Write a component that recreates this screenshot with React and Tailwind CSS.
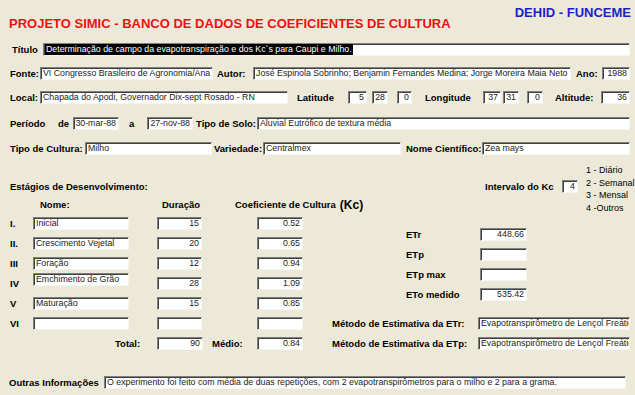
import React from "react";

/* campo de texto estilo Windows (borda afundada) */
function Field({ w, right, className = "", children }) {
  return (
    <div
      className={`${w} h-[13px] shrink-0 flex items-center overflow-hidden whitespace-nowrap bg-white border border-t-[#808080] border-l-[#808080] border-r-[#f6f5f0] border-b-[#f6f5f0] shadow-[inset_1px_1px_0_#404040] text-[8.8px] leading-none text-[#222] ${
        right ? "justify-end pr-[2px]" : "pl-[2px]"
      } ${className}`}
    >
      {children}
    </div>
  );
}

function Label({ w, className = "", children }) {
  return (
    <span className={`${w} shrink-0 font-bold whitespace-nowrap ${className}`}>
      {children}
    </span>
  );
}

const stages = [
  ["I.", "Inicial", "15", "0.52"],
  ["II.", "Crescimento Vejetal", "20", "0.65"],
  ["III", "Foração", "12", "0.94"],
  ["IV", "Emchimento de Grão", "28", "1.09"],
  ["V", "Maturação", "15", "0.85"],
  ["VI", "", "", ""],
];

const etRows = [
  ["ETr", "448.66"],
  ["ETp", ""],
  ["ETp max", ""],
  ["ETo medido", "535.42"],
];

export default function App() {
  return (
    <div className="w-[635px] h-[395px] overflow-hidden bg-[#ece9d8] font-['Liberation_Sans',Arial,sans-serif] text-[9.5px] leading-none text-black">
      {/* CABEÇALHO */}
      <div className="h-[43px] flex items-start">
        <h1 className="ml-[9px] mt-[16px] text-[13px] leading-[15px] font-bold text-[#ee1111] whitespace-nowrap">
          PROJETO SIMIC - BANCO DE DADOS DE COEFICIENTES DE CULTURA
        </h1>
        <div className="ml-auto mr-[4px] mt-[5px] text-[13px] leading-[15px] font-bold text-[#1e1ec8] whitespace-nowrap">
          DEHID - FUNCEME
        </div>
      </div>

      {/* TÍTULO */}
      <div className="h-[13px] flex items-center pl-[12px]">
        <Label w="w-[31px]">Título</Label>
        <Field w="w-[587px]" className="!pl-[1px]">
          <span className="h-full flex items-center bg-black text-white px-[1px]">
            Determinação de campo da evapotranspiração e dos Kc`s para Caupi e Milho.
          </span>
        </Field>
      </div>

      {/* FONTE / AUTOR / ANO */}
      <div className="mt-[11px] h-[13px] flex items-center pl-[10px]">
        <Label w="w-[30px]">Fonte:</Label>
        <Field w="w-[173px]">VI Congresso Brasileiro de Agronomia/Ana</Field>
        <Label w="w-[40px]" className="pl-[4px]">Autor:</Label>
        <Field w="w-[318px]">
          José Espinola Sobrinho; Benjamin Fernandes Medina; Jorge Moreira Maia Neto
        </Field>
        <Label w="w-[31px]" className="pl-[5px]">Ano:</Label>
        <Field w="w-[28px]" right>1988</Field>
      </div>

      {/* LOCAL / COORDENADAS */}
      <div className="mt-[11px] h-[13px] flex items-center pl-[10px]">
        <Label w="w-[30px]">Local:</Label>
        <Field w="w-[248px]">Chapada do Apodi, Governador Dix-sept Rosado - RN</Field>
        <Label w="w-[60px]" className="pl-[9px]">Latitude</Label>
        <Field w="w-[19px]" right>5</Field>
        <Field w="w-[16px]" right className="ml-[5px]">28</Field>
        <Field w="w-[15px]" right className="ml-[9px]">0</Field>
        <Label w="w-[71px]" className="pl-[13px]">Longitude</Label>
        <Field w="w-[18px]" right>37</Field>
        <Field w="w-[16px]" right className="ml-[2px]">31</Field>
        <Field w="w-[16px]" right className="ml-[8px]">0</Field>
        <Label w="w-[58px]" className="pl-[12px]">Altitude:</Label>
        <Field w="w-[29px]" right>36</Field>
      </div>

      {/* PERÍODO / SOLO */}
      <div className="mt-[13px] h-[13px] flex items-center pl-[10px]">
        <Label w="w-[48px]">Período</Label>
        <Label w="w-[15px]">de</Label>
        <Field w="w-[46px]" right>30-mar-88</Field>
        <Label w="w-[28px]" className="pl-[10px]">a</Label>
        <Field w="w-[46px]" right>27-nov-88</Field>
        <Label w="w-[64px]" className="pl-[3px]">Tipo de Solo:</Label>
        <Field w="w-[373px]">Aluvial Eutrófico de textura média</Field>
      </div>

      {/* CULTURA */}
      <div className="mt-[12px] h-[13px] flex items-center pl-[10px]">
        <Label w="w-[75px]">Tipo de Cultura:</Label>
        <Field w="w-[127px]">Milho</Field>
        <Label w="w-[51px]" className="pl-[2px]">Variedade:</Label>
        <Field w="w-[138px]">Centralmex</Field>
        <Label w="w-[81px]" className="pl-[5px]">Nome Científico:</Label>
        <Field w="w-[148px]">Zea mays</Field>
      </div>

      <div className="h-[195px] flex">
        {/* ESTÁGIOS */}
        <div className="w-[330px] shrink-0 flex flex-col">
          <p className="mt-[25px] h-[13px] flex items-center pl-[10px] font-bold">
            Estágios de Desenvolvimento:
          </p>
          <div className="mt-[5px] h-[13px] flex items-center pl-[40px] font-bold whitespace-nowrap">
            <span className="w-[122px] shrink-0">Nome:</span>
            <span className="w-[73px] shrink-0">Duração</span>
            <span className="flex items-center">
              Coeficiente de Cultura
              <span className="ml-[4px] text-[12px] font-bold">(Kc)</span>
            </span>
          </div>
          <div className="mt-[6px] flex flex-col gap-[7px]">
            {stages.map(([num, nome, dur, kc]) => (
              <div key={num} className="h-[13px] flex items-center">
                <Label w="w-[33px]" className="pl-[10px]">{num}</Label>
                <Field w="w-[96px]" className={num === "IV" ? "mb-[8px]" : ""}>
                  {nome}
                </Field>
                <Field w="w-[45px]" right className="ml-[28px]">{dur}</Field>
                <Field w="w-[46px]" right className="ml-[55px]">{kc}</Field>
              </div>
            ))}
            <div className="h-[13px] flex items-center pl-[115px]">
              <Label w="w-[42px]">Total:</Label>
              <Field w="w-[46px]" right>90</Field>
              <Label w="w-[54px]" className="pl-[9px]">Médio:</Label>
              <Field w="w-[46px]" right>0.84</Field>
            </div>
          </div>
        </div>

        {/* KC / EVAPOTRANSPIRAÇÃO */}
        <div className="flex-1 flex flex-col">
          <div className="mt-[9px] flex pl-[155px]">
            <div className="mt-[16px] h-[13px] flex items-center self-start">
              <Label w="w-[77px]">Intervalo do Kc</Label>
              <Field w="w-[16px]" right>4</Field>
            </div>
            <div className="ml-[8px] text-[9px] leading-[12.5px] whitespace-nowrap">
              <p>1 - Diário</p>
              <p>2 - Semanal</p>
              <p>3 - Mensal</p>
              <p>4 -Outros</p>
            </div>
          </div>

          <div className="mt-[14px] flex flex-col gap-[7px] pl-[76px]">
            {etRows.map(([label, value]) => (
              <div key={label} className="h-[13px] flex items-center">
                <Label w="w-[74px]">{label}</Label>
                <Field w="w-[47px]" right>{value}</Field>
              </div>
            ))}
          </div>

          <div className="mt-[16px] flex flex-col gap-[7px] pl-[2px]">
            <div className="h-[13px] flex items-center">
              <Label w="w-[146px]">Método de Estimativa da ETr:</Label>
              <Field w="w-[152px]">Evapotranspirômetro de Lençol Freático</Field>
            </div>
            <div className="h-[13px] flex items-center">
              <Label w="w-[146px]">Método de Estimativa da ETp:</Label>
              <Field w="w-[152px]">Evapotranspirômetro de Lençol Freático</Field>
            </div>
          </div>
        </div>
      </div>

      {/* OUTRAS INFORMAÇÕES */}
      <div className="mt-[26px] h-[13px] flex items-center pl-[9px]">
        <Label w="w-[95px]">Outras Informações</Label>
        <Field w="w-[522px]">
          O experimento foi feito com média de duas repetições, com 2 evapotranspirômetros para o milho e 2 para a grama.
        </Field>
      </div>
    </div>
  );
}
